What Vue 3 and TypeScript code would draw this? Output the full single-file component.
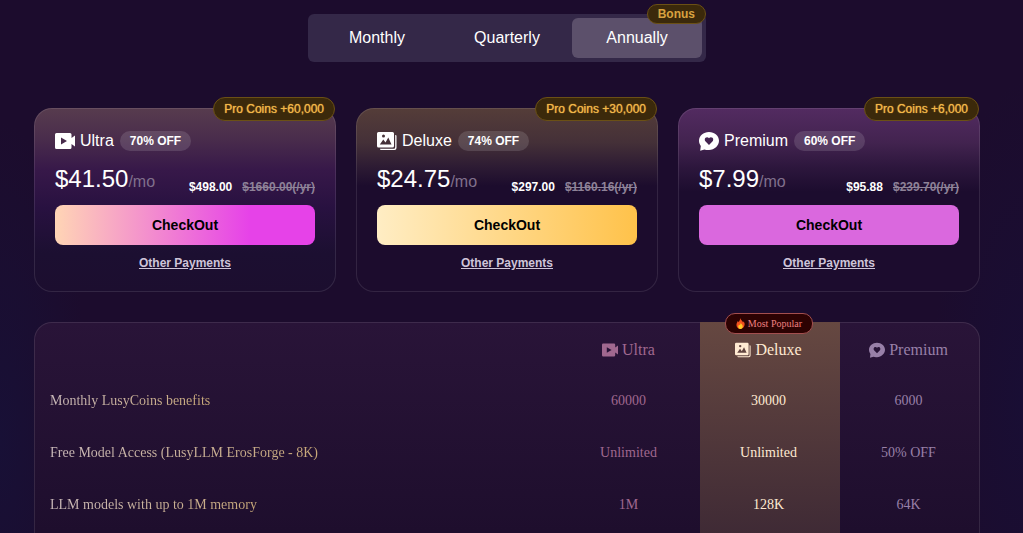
<script setup lang="ts">
import { ref } from 'vue'

type PlanId = 'ultra' | 'deluxe' | 'premium'

interface Plan {
  id: PlanId
  name: string
  coins: string
  off: string
  monthly: string
  total: string
  original: string
}

const periods = ['Monthly', 'Quarterly', 'Annually']
const active = ref('Annually')

const plans: Plan[] = [
  { id: 'ultra', name: 'Ultra', coins: '60,000', off: '70%', monthly: '$41.50', total: '$498.00', original: '$1660.00' },
  { id: 'deluxe', name: 'Deluxe', coins: '30,000', off: '74%', monthly: '$24.75', total: '$297.00', original: '$1160.16' },
  { id: 'premium', name: 'Premium', coins: '6,000', off: '60%', monthly: '$7.99', total: '$95.88', original: '$239.70' },
]

const icons: Record<PlanId, string> = {
  ultra:
    'M1.500 2H15A1.500 1.500 0 0 1 16.500 3.500V7L20 4.500V15.500L16.500 13V16.500A1.500 1.500 0 0 1 15 18H1.500A1.500 1.500 0 0 1 0 16.500V3.500A1.500 1.500 0 0 1 1.500 2zM6 6.500V13.500L12 10z',
  deluxe:
    'M1.500 1H15.500A1.500 1.500 0 0 1 17 2.500V15A1.500 1.500 0 0 1 15.500 16.500H1.500A1.500 1.500 0 0 1 0 15V2.500A1.500 1.500 0 0 1 1.500 1zM2.800 13.500H14.500L11.300 6.500L8.500 11.500L6.300 8.500zM6.500 3.600A1.500 1.500 0 1 0 6.500 6.600A1.500 1.500 0 1 0 6.500 3.600zM18.200 4H18.500A1 1 0 0 1 19.500 5V17A2 2 0 0 1 17.500 19H4A1 1 0 0 1 3 18V17.700H16.700A1.500 1.500 0 0 0 18.200 16.200z',
  premium:
    'M10 1C4.500 1 0 4.800 0 9.800C0 12 .8 13.500 1.800 15L1.200 19.800L5.500 18.500C7 19 8.200 19.200 10 19C15.500 18.800 20 14.800 20 9.800S15.500 1 10 1zM10 14L6.600 10.600C5.500 9.500 5.500 7.800 6.500 6.800C7.500 5.800 9.200 6 10 7.300C10.800 6 12.500 5.800 13.500 6.800C14.500 7.800 14.500 9.500 13.400 10.600z',
}

const features = [
  { label: 'Monthly LusyCoins benefits', values: ['60000', '30000', '6000'] },
  { label: 'Free Model Access (LusyLLM ErosForge - 8K)', values: ['Unlimited', 'Unlimited', '50% OFF'] },
  { label: 'LLM models with up to 1M memory', values: ['1M', '128K', '64K'] },
]
</script>

<template>
  <main class="page">
    <div class="tabs">
      <button
        v-for="p in periods"
        :key="p"
        type="button"
        class="tab"
        :class="{ active: active === p }"
        :aria-pressed="active === p"
        @click="active = p"
      >{{ p }}</button>
      <span class="badge bonus">Bonus</span>
    </div>

    <section class="cards">
      <article v-for="plan in plans" :key="plan.id" class="card" :class="plan.id">
        <span class="badge coins">Pro Coins +{{ plan.coins }}</span>
        <h2 class="title">
          <svg class="icon" viewBox="0 0 20 20" aria-hidden="true"><path fill-rule="evenodd" :d="icons[plan.id]" /></svg>
          <span class="name">{{ plan.name }}</span>
          <span class="off">{{ plan.off }} OFF</span>
        </h2>
        <div class="prices">
          <div class="monthly">{{ plan.monthly }}<span class="unit">/mo</span></div>
          <div class="yearly">
            <span>{{ plan.total }}</span>
            <s>{{ plan.original }}(/yr)</s>
          </div>
        </div>
        <button type="button" class="checkout">CheckOut</button>
        <a href="#" class="other">Other Payments</a>
      </article>
    </section>

    <section class="compare">
      <span class="highlight"></span>
      <table>
        <thead>
          <tr>
            <td></td>
            <th v-for="plan in plans" :key="plan.id" scope="col" :class="plan.id">
              <span class="head">
                <svg class="small-icon" viewBox="0 0 20 20" aria-hidden="true"><path fill-rule="evenodd" :d="icons[plan.id]" /></svg>
                {{ plan.name }}
              </span>
            </th>
          </tr>
        </thead>
        <tbody>
          <tr v-for="f in features" :key="f.label">
            <th scope="row"><span class="feature">{{ f.label }}</span></th>
            <td v-for="(v, i) in f.values" :key="i" :class="plans[i].id">{{ v }}</td>
          </tr>
        </tbody>
      </table>
      <span class="popular">
        <svg class="flame" viewBox="0 0 10 12" aria-hidden="true">
          <path fill="#f4511e" d="M4.600 0C5 2.200 7.200 3.200 7.800 4.800C8.200 4.500 8.300 4 8.300 3.500C9.400 4.800 9.800 6.200 9.500 7.800C9.100 10.300 7.300 12 5 12C2.300 12 .5 10 .5 7.600C.5 5.800 1.500 4.700 2 3.300C2.400 3.700 2.700 4.200 2.800 4.700C4 3.500 4.700 1.800 4.600 0z" />
          <path fill="#ffca28" d="M5.200 5C5.300 6.600 7.500 7.300 7.500 9.300C7.500 10.900 6.400 12 5 12S2.500 11 2.500 9.500C2.500 8.300 3.100 7.700 3.400 7C3.700 7.300 3.900 7.600 4 8C4.800 7.200 5.300 6.200 5.200 5z" />
        </svg>
        Most Popular
      </span>
    </section>
  </main>
</template>

<style>
html {
  scrollbar-width: none;
  background: #1c0c2c;
}
</style>

<style scoped>
.page {
  box-sizing: border-box;
  min-height: 100vh;
  padding: 14px 43px 0 34px;
  background:
    radial-gradient(ellipse 90px 320px at 0 440px, #181036, transparent),
    radial-gradient(ellipse 90px 320px at 100% 400px, #190e34, transparent),
    #1c0c2d;
  font-family: "Liberation Sans", Arial, sans-serif;
  color: #fff;
}

.tabs {
  position: relative;
  display: flex;
  width: fit-content;
  margin: 0 auto 46px;
  padding: 4px;
  border-radius: 6px;
  background: #342848;
}

.tab {
  width: 130px;
  height: 40px;
  padding: 0;
  border: 0;
  border-radius: 6px;
  background: transparent;
  color: #fff;
  font: 16px "Liberation Sans", Arial, sans-serif;
  cursor: pointer;
}

.tab.active {
  background: #5c506b;
}

.badge {
  position: absolute;
  box-sizing: border-box;
  padding: 0 10px;
  border: 1px solid #6b5015;
  border-radius: 12px;
  background: #3b290b;
  color: #f3b747;
  font-size: 12px;
  white-space: nowrap;
}

.bonus {
  top: -10px;
  right: 0;
  line-height: 18px;
  font-weight: 700;
  color: #d8a240;
}

.coins {
  top: -12px;
  right: 0;
  line-height: 22px;
  text-shadow: 0 0 1px currentColor;
}

.cards {
  display: grid;
  grid-template-columns: repeat(3, 1fr);
  gap: 20px;
}

.card {
  position: relative;
  display: flex;
  flex-direction: column;
  padding: 20px;
  border: 1px solid rgba(255, 255, 255, 0.1);
  border-radius: 18px;
}

.card.ultra {
  background: linear-gradient(180deg, #573c4e 0, #4a2d4c 30px, #371849 62px, #281140 100px, #1c0f31 145px, #1c0e2f 100%) border-box;
}

.card.deluxe {
  background: linear-gradient(180deg, #553d39 0, #443038 35px, #2c1a33 60px, #1c0c2d 78px) border-box;
}

.card.premium {
  background: linear-gradient(180deg, #532b61 0, #42234f 35px, #2c163c 60px, #1c0c2e 84px) border-box;
}

.title {
  display: flex;
  align-items: center;
  height: 24px;
  margin: 0;
  font-size: 16px;
  font-weight: 400;
}

.icon {
  width: 20px;
  height: 20px;
  margin-right: 5px;
  fill: #fff;
}

.off {
  margin-left: 6px;
  padding: 0 10px;
  border-radius: 10px;
  background: rgba(255, 255, 255, 0.13);
  font-size: 12px;
  font-weight: 700;
  line-height: 20px;
}

.prices {
  display: flex;
  align-items: flex-end;
  justify-content: space-between;
  margin: 10px 0;
}

.monthly {
  font-size: 24px;
  line-height: 32px;
}

.unit {
  color: #80708c;
  font-size: 16px;
  line-height: 16px;
}

.yearly {
  display: flex;
  gap: 10px;
  font-size: 12px;
  font-weight: 700;
  line-height: 16px;
}

.yearly s {
  color: #8e8298;
}

.checkout {
  height: 40px;
  padding: 0;
  border: 0;
  border-radius: 8px;
  color: #000;
  font: 700 14px "Liberation Sans", Arial, sans-serif;
  cursor: pointer;
}

.ultra .checkout {
  background: linear-gradient(90deg, #ffd5b5, #e642e8 75%);
}

.deluxe .checkout {
  background: linear-gradient(90deg, #ffedc4, #ffc24a);
}

.premium .checkout {
  background: #da68de;
}

.other {
  align-self: center;
  margin-top: 10px;
  color: #cec4d8;
  font-size: 12px;
  font-weight: 700;
  line-height: 16px;
}

.compare {
  position: relative;
  margin-top: 30px;
  padding-bottom: 52px;
  border-radius: 18px;
  background: linear-gradient(180deg, #291438 0, #1e0e2d 210px);
  box-shadow: inset 0 0 0 1px rgba(255, 255, 255, 0.1);
  font-family: "Liberation Serif", "Times New Roman", serif;
}

.highlight {
  position: absolute;
  top: 0;
  right: 140px;
  bottom: 0;
  width: 140px;
  background: linear-gradient(180deg, #664841 0, #3f2a35 212px);
}

table {
  position: relative;
  width: 100%;
  table-layout: fixed;
  border-collapse: collapse;
  font-size: 14px;
}

th,
td {
  box-sizing: border-box;
  height: 52px;
  padding: 0 3px 0 0;
  font-weight: 400;
  text-align: center;
}

thead th {
  width: 140px;
  height: 53px;
  font-size: 16px;
}

tbody th {
  padding-left: 16px;
  text-align: left;
}

.feature {
  background: linear-gradient(90deg, #cbbbbb, #c8a878);
  background-clip: text;
  color: transparent;
}

.head {
  display: flex;
  align-items: center;
  justify-content: center;
  gap: 4px;
  padding-top: 2px;
}

.small-icon {
  width: 16px;
  height: 16px;
  fill: currentColor;
}

table .ultra {
  color: #a0688f;
}

table .deluxe {
  color: #ffead2;
}

table .premium {
  color: #9880a8;
}

.popular {
  position: absolute;
  top: -9px;
  right: 167px;
  display: flex;
  align-items: center;
  gap: 3px;
  padding: 0 10px;
  border: 1px solid #a34e4e;
  border-radius: 10px;
  background: #2c0202;
  color: #f08080;
  font-size: 10px;
  line-height: 19px;
}

.flame {
  width: 9px;
  height: 11px;
}
</style>
